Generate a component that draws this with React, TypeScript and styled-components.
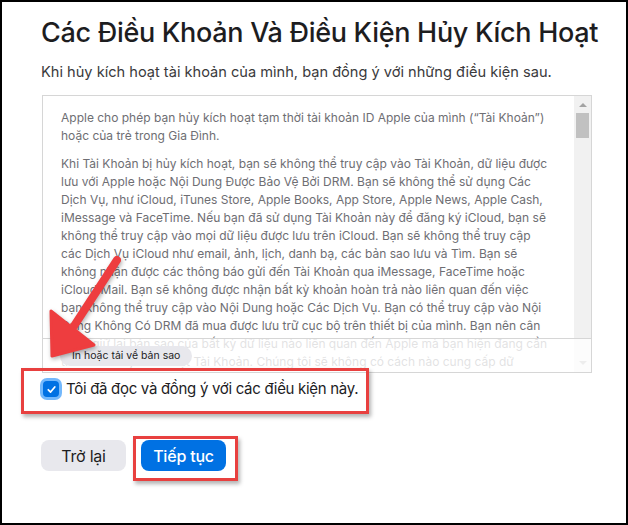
import React from "react";
import styled, { createGlobalStyle } from "styled-components";

const Global = createGlobalStyle`
  html, body { margin: 0; padding: 0; background: #fff; }
  body { font-family: Inter, "Noto Sans", "Liberation Sans", sans-serif; -webkit-font-smoothing: antialiased; }
  * { box-sizing: border-box; }
`;

const Frame = styled.div`
  position: relative;
  width: 628px;
  height: 525px;
  border: 2px solid #000;
  background: #fff;
  overflow: hidden;
`;

const Content = styled.div`
  display: flex;
  flex-direction: column;
  padding: 14px 0 0 39px;
`;

const Title = styled.h1`
  margin: 0;
  font-size: 27px;
  line-height: 34px;
  font-weight: 500;
  letter-spacing: -0.3px;
  color: #1d1d1f;
`;

const Subtitle = styled.p`
  margin: 12px 0 0;
  font-size: 14.6px;
  line-height: 20px;
  color: #3a3a3c;
`;

const TermsBox = styled.div`
  position: relative;
  margin: 13px 0 0 1px;
  width: 550px;
  height: 278px;
  border: 1px solid #d6d6d6;
  display: grid;
  grid-template-columns: 1fr 17px;
  overflow: hidden;
`;

const TermsText = styled.div`
  padding: 13px 18px 0 18px;
  overflow: hidden;
  font-size: 12px;
  line-height: 18px;
  color: #6e6e73;
`;

const Para = styled.p`
  margin: 0 0 10px;
`;

const Line = styled.span`
  display: block;
  white-space: nowrap;
`;

const Scrollbar = styled.div`
  background: #f1f1f1;
  display: flex;
  flex-direction: column;
  align-items: center;
`;

const ArrowUp = styled.div`
  margin-top: 7px;
  width: 0;
  height: 0;
  border-left: 4px solid transparent;
  border-right: 4px solid transparent;
  border-bottom: 4px solid #a3a3a3;
`;

const Thumb = styled.div`
  margin-top: 6px;
  width: 13px;
  height: 25px;
  background: #c1c1c1;
`;

const Spacer = styled.div`
  flex: 1;
`;

const ArrowDown = styled.div`
  margin-bottom: 7px;
  width: 0;
  height: 0;
  border-left: 4px solid transparent;
  border-right: 4px solid transparent;
  border-top: 4px solid #a3a3a3;
`;

const FadeFooter = styled.div`
  position: absolute;
  left: 0;
  right: 0;
  bottom: 0;
  height: 34px;
  border-top: 1px solid #d6d6d6;
  background: rgba(255, 255, 255, 0.8);
  display: flex;
  align-items: flex-start;
  padding: 7px 0 0 17px;
`;

const PillButton = styled.button`
  height: 20px;
  padding: 0 12px;
  border: none;
  border-radius: 10px;
  background: #e8e8ed;
  color: #1d1d1f;
  font-family: inherit;
  font-size: 10.5px;
  line-height: 20px;
`;

const CheckRow = styled.label`
  display: flex;
  align-items: center;
  gap: 7px;
  margin: 6px 0 0 2px;
  font-size: 15px;
  letter-spacing: -0.3px;
  line-height: 20px;
  color: #1d1d1f;
`;

const CheckBox = styled.span`
  width: 16px;
  height: 16px;
  border-radius: 4px;
  background: #0071e3;
  box-shadow: 0 0 0 3px rgba(0, 125, 250, 0.55);
  display: flex;
  align-items: center;
  justify-content: center;
  flex: none;
`;

const Buttons = styled.div`
  display: flex;
  gap: 15px;
  margin: 41px 0 0 0;
`;

const Button = styled.button<{ $primary?: boolean }>`
  width: 85px;
  height: 31px;
  border: none;
  border-radius: 8px;
  font-family: inherit;
  font-size: 16px;
  letter-spacing: -0.2px;
  font-weight: ${(p) => (p.$primary ? 500 : 400)};
  background: ${(p) => (p.$primary ? "#0071e3" : "#e8e8ed")};
  color: ${(p) => (p.$primary ? "#fff" : "#1d1d1f")};
`;

const Callout = styled.div<{ $x: number; $y: number; $w: number; $h: number }>`
  position: absolute;
  left: ${(p) => p.$x}px;
  top: ${(p) => p.$y}px;
  width: ${(p) => p.$w}px;
  height: ${(p) => p.$h}px;
  border: 3px solid #e8403f;
  box-shadow: 2px 3px 4px rgba(0, 0, 0, 0.3);
  pointer-events: none;
`;

const ArrowLayer = styled.svg`
  position: absolute;
  left: -2px;
  top: -2px;
  pointer-events: none;
  filter: drop-shadow(1px 2px 2px rgba(0, 0, 0, 0.3));
`;

const paragraphs: string[][] = [
  [
    "Apple cho phép bạn hủy kích hoạt tạm thời tài khoản ID Apple của mình (“Tài Khoản”)",
    "hoặc của trẻ trong Gia Đình.",
  ],
  [
    "Khi Tài Khoản bị hủy kích hoạt, bạn sẽ không thể truy cập vào Tài Khoản, dữ liệu được",
    "lưu với Apple hoặc Nội Dung Được Bảo Vệ Bởi DRM. Bạn sẽ không thể sử dụng Các",
    "Dịch Vụ, như iCloud, iTunes Store, Apple Books, App Store, Apple News, Apple Cash,",
    "iMessage và FaceTime. Nếu bạn đã sử dụng Tài Khoản này để đăng ký iCloud, bạn sẽ",
    "không thể truy cập vào mọi dữ liệu được lưu trên iCloud. Bạn sẽ không thể truy cập",
    "các Dịch Vụ iCloud như email, ảnh, lịch, danh bạ, các bản sao lưu và Tìm. Bạn sẽ",
    "không nhận được các thông báo gửi đến Tài Khoản qua iMessage, FaceTime hoặc",
    "iCloud Mail. Bạn sẽ không được nhận bất kỳ khoản hoàn trả nào liên quan đến việc",
    "bạn không thể truy cập vào Nội Dung hoặc Các Dịch Vụ. Bạn có thể truy cập vào Nội",
    "Dung Không Có DRM đã mua được lưu trữ cục bộ trên thiết bị của mình. Bạn nên cân",
    "nhắc giữ lại bản sao của bất kỳ dữ liệu nào liên quan đến Apple mà bạn hiện đang cần",
    "trước khi hủy kích hoạt Tài Khoản. Chúng tôi sẽ không có cách nào cung cấp dữ",
    "liệu đó cho bạn khi Tài Khoản của bạn bị hủy kích hoạt.",
  ],
];

export default function App() {
  return (
    <Frame>
      <Global />
      <Content>
        <Title>Các Điều Khoản Và Điều Kiện Hủy Kích Hoạt</Title>
        <Subtitle>Khi hủy kích hoạt tài khoản của mình, bạn đồng ý với những điều kiện sau.</Subtitle>
        <TermsBox>
          <TermsText>
            {paragraphs.map((lines, i) => (
              <Para key={i}>
                {lines.map((l, j) => (
                  <Line key={j}>{l}</Line>
                ))}
              </Para>
            ))}
          </TermsText>
          <Scrollbar>
            <ArrowUp />
            <Thumb />
            <Spacer />
            <ArrowDown />
          </Scrollbar>
          <FadeFooter>
            <PillButton>In hoặc tải về bản sao</PillButton>
          </FadeFooter>
        </TermsBox>
        <CheckRow>
          <CheckBox>
            <svg width="11" height="11" viewBox="0 0 12 12">
              <path d="M2.5 6.3 L5 8.8 L9.6 3.2" fill="none" stroke="#fff" strokeWidth="1.9" strokeLinecap="round" strokeLinejoin="round" />
            </svg>
          </CheckBox>
          Tôi đã đọc và đồng ý với các điều kiện này.
        </CheckRow>
        <Buttons>
          <Button>Trở lại</Button>
          <Button $primary>Tiếp tục</Button>
        </Buttons>
      </Content>

      <Callout $x={19} $y={366} $w={348} $h={46} />
      <Callout $x={131} $y={434} $w={105} $h={45} />
      <ArrowLayer width="628" height="525" viewBox="0 0 628 525">
        <line x1="117" y1="260" x2="74" y2="326" stroke="#ee3d3f" strokeWidth="8" strokeLinecap="round" />
        <polygon points="52,356 51,311 94,345" fill="#ee3d3f" stroke="#ee3d3f" strokeWidth="3" strokeLinejoin="round" />
      </ArrowLayer>
    </Frame>
  );
}
